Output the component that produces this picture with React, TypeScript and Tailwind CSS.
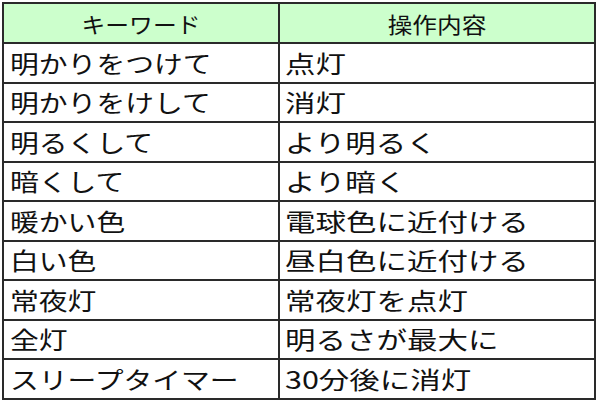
const ROWS: [string, string][] = [
  ["明かりをつけて", "点灯"],
  ["明かりをけして", "消灯"],
  ["明るくして", "より明るく"],
  ["暗くして", "より暗く"],
  ["暖かい色", "電球色に近付ける"],
  ["白い色", "昼白色に近付ける"],
  ["常夜灯", "常夜灯を点灯"],
  ["全灯", "明るさが最大に"],
  ["スリープタイマー", "30分後に消灯"],
];

/** One stretched line of cell text (the source glyphs are wider than tall). */
function CellText({ children, wide }: { children: string; wide?: boolean }) {
  return (
    <span
      className={
        wide
          ? "inline-block origin-left scale-x-[1.27] whitespace-nowrap text-[24px] leading-none"
          : "inline-block origin-left scale-x-[1.2] whitespace-nowrap text-[24px] leading-none"
      }
    >
      {children}
    </span>
  );
}

export default function App() {
  return (
    <div
      className="h-[402px] w-[600px] bg-white pl-[2px] pt-[2px] text-[#111]"
      style={{ fontFamily: '"Noto Sans CJK JP", "Noto Sans", sans-serif' }}
    >
      <div className="w-[594px] border-2 border-[#2a2a2a]">
        {/* header */}
        <div className="flex h-[40px] border-b-2 border-[#2a2a2a] bg-[#ccffcc]">
          <div className="flex w-[276px] items-center justify-center border-r-2 border-[#2a2a2a]">
            <span className="inline-block scale-x-[1.08] text-[22px] leading-none">キーワード</span>
          </div>
          <div className="flex flex-1 items-center justify-center">
            <span className="inline-block scale-x-[1.12] text-[22px] leading-none">操作内容</span>
          </div>
        </div>

        {ROWS.map(([keyword, action], i) => (
          <div
            key={keyword}
            className={
              i === ROWS.length - 1
                ? "flex h-[37.5px]"
                : "flex h-[39.5px] border-b-2 border-[#2a2a2a]"
            }
          >
            <div className="flex w-[276px] items-center border-r-2 border-[#2a2a2a] pl-[6px]">
              <CellText>{keyword}</CellText>
            </div>
            <div className="flex flex-1 items-center pl-[5px]">
              <CellText wide>{action}</CellText>
            </div>
          </div>
        ))}
      </div>
    </div>
  );
}
